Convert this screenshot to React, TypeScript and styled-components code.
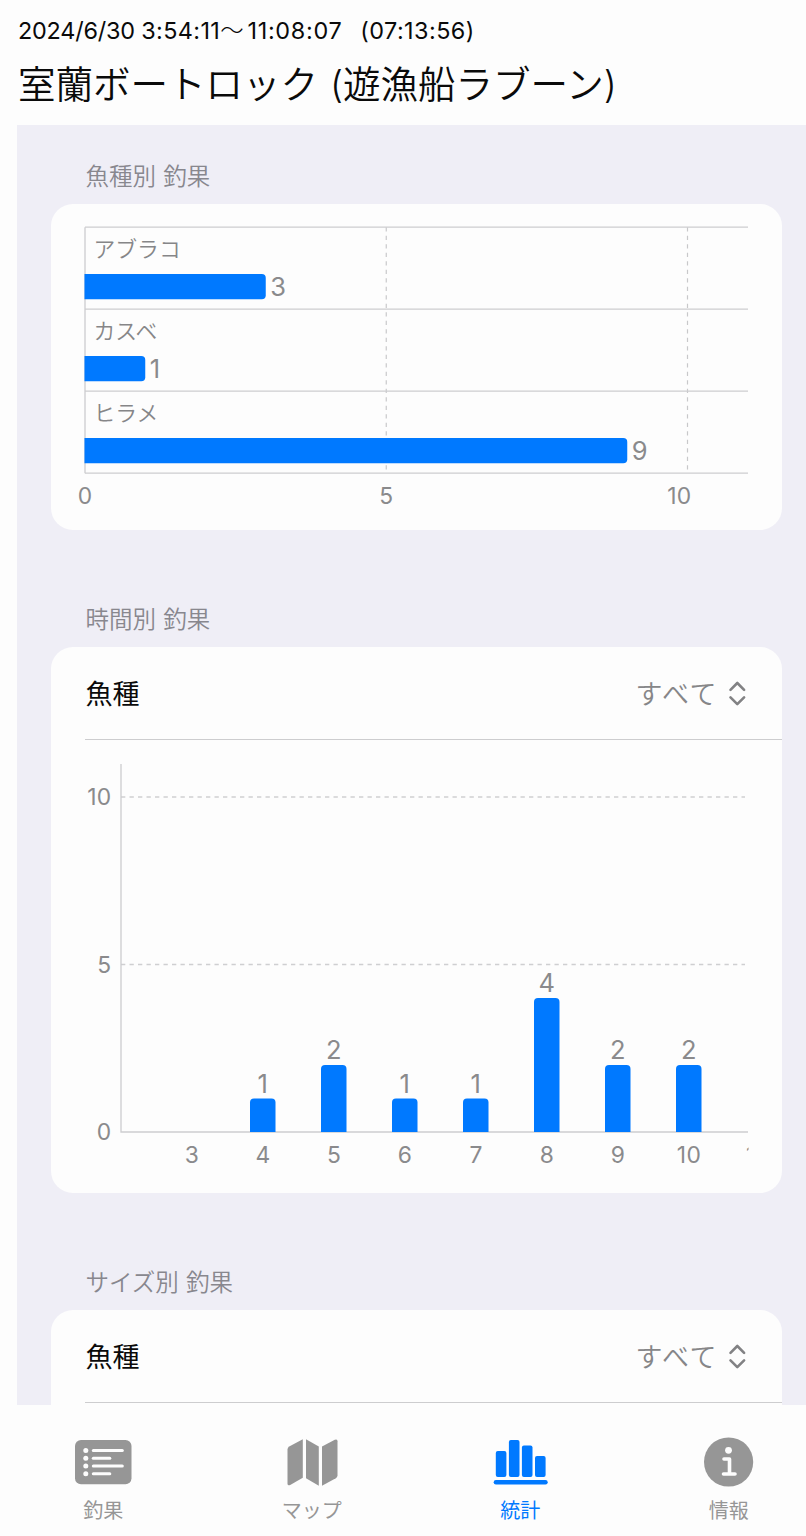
import React from "react";
import styled, { createGlobalStyle } from "styled-components";

const FONT = `Inter, "Noto Sans CJK JP", sans-serif`;
const BLUE = "#0079ff";
const GRAY = "#8a8a8c";
const SURFACE = "#fdfdfd";
const LINE = "#cdcdcf";

const GlobalStyle = createGlobalStyle`
  * { box-sizing: border-box; }
  body { margin: 0; background: ${SURFACE}; font-family: ${FONT}; }
`;

const Screen = styled.div`
  display: flex;
  flex-direction: column;
  width: 806px;
  height: 1536px;
  overflow: hidden;
  background: ${SURFACE};
  color: #0a0a0a;
`;

const Header = styled.header`
  flex: none;
  height: 125px;
  padding: 16px 0 0 18px;
  white-space: pre;
`;

const TripTime = styled.div`
  height: 30px;
  line-height: 30px;
  font-size: 23.4px;
`;

const TimePart = styled.span<{ $spacing: number; $weight?: number }>`
  letter-spacing: ${(p) => p.$spacing}px;
  font-weight: ${(p) => p.$weight ?? 400};
`;

const TripTitle = styled.h1`
  margin: 11px 0 0;
  height: 56px;
  line-height: 56px;
  font-size: 37.5px;
  font-weight: 350;
  word-spacing: 1.5px;
`;

const ScrollArea = styled.main`
  flex: none;
  height: 1280px;
  margin-left: 17px;
  padding: 0 24px 0 34px;
  overflow: hidden;
  background: #efeef6;
`;

const Section = styled.section`
  margin-bottom: 38px;
`;

const SectionTitle = styled.h2`
  margin: 0;
  height: 79px;
  padding: 37px 0 0 34.5px;
  line-height: 26px;
  font-family: "Noto Sans CJK JP", sans-serif;
  font-size: 23.5px;
  font-weight: 350;
  word-spacing: 2px;
  color: #88878e;
`;

const Card = styled.div`
  border-radius: 22px;
  background: ${SURFACE};
  overflow: hidden;
`;

const PickerRow = styled.div`
  display: flex;
  align-items: center;
  justify-content: space-between;
  height: 93px;
  margin-left: 34px;
  padding: 0 36px 2px 0.5px;
  border-bottom: 1px solid ${LINE};
  font-size: 27px;
  font-weight: 400;
`;

const PickerValue = styled.span`
  display: flex;
  align-items: center;
  gap: 10px;
  padding-top: 1px;
  font-weight: 350;
  letter-spacing: 1.5px;
  color: #868688;
`;

const Chart = styled.svg`
  display: block;
  font-family: ${FONT};
  fill: ${GRAY};
`;

const TabBar = styled.nav`
  display: flex;
  flex: none;
  height: 131px;
  margin-left: -1px;
`;

const Tab = styled.a<{ $active?: boolean }>`
  display: flex;
  flex: none;
  flex-direction: column;
  align-items: center;
  width: 208.5px;
  padding-top: 29px;
  color: ${(p) => (p.$active ? BLUE : "#969696")};
`;

const TabLabel = styled.span`
  margin-top: 7px;
  line-height: 28px;
  font-size: 20px;
  font-weight: 400;
`;

const SPECIES = [
  { name: "アブラコ", count: 3 },
  { name: "カスベ", count: 1 },
  { name: "ヒラメ", count: 9 },
];

const HOURS = [
  { hour: 3, count: 0 },
  { hour: 4, count: 1 },
  { hour: 5, count: 2 },
  { hour: 6, count: 1 },
  { hour: 7, count: 1 },
  { hour: 8, count: 4 },
  { hour: 9, count: 2 },
  { hour: 10, count: 2 },
  { hour: 11, count: 0 },
];

function SpeciesChart() {
  const left = 34;
  const right = 697;
  const unit = 60.25;
  const top = 23.2;
  const row = 82;
  const bottom = top + row * 3;
  return (
    <Chart width="731" height="326">
      {[5, 10].map((n) => (
        <line key={n} x1={left + n * unit} x2={left + n * unit} y1={top} y2={bottom - 3} stroke="#c8c8ca" strokeWidth="1.2" strokeDasharray="4.3 4.2" />
      ))}
      {[0, 1, 2, 3].map((i) => (
        <line key={i} x1={left} x2={right} y1={top + i * row} y2={top + i * row} stroke={LINE} strokeWidth="1.3" />
      ))}
      <line x1={left} x2={left} y1={top} y2={bottom} stroke={LINE} strokeWidth="1.3" />
      {SPECIES.map((s, i) => {
        const y = top + i * row;
        const w = s.count * unit;
        return (
          <g key={s.name}>
            <text x={left + 8.5} y={y + 29.6} fontSize="21.8" fontWeight="350" fill="#868688">{s.name}</text>
            <path
              fill={BLUE}
              d={`M${left - 0.5} ${y + 46.8}h${w - 3.5}q4 0 4 4v17.3q0 4 -4 4h${-(w - 3.5)}z`}
            />
            <text x={left + w + 4.5} y={y + 69} fontSize="25.5">{s.count}</text>
          </g>
        );
      })}
      <text x={left} y="299.5" fontSize="22.8" textAnchor="middle">0</text>
      <text x={left + 5 * unit} y="299.5" fontSize="22.8" textAnchor="middle">5</text>
      <text x="640.5" y="299.5" fontSize="22.8" textAnchor="end" letterSpacing="0.3">10</text>
    </Chart>
  );
}

function HourChart() {
  const left = 70;
  const right = 697;
  const base = 392;
  const unit = 33.5;
  const x = (hour: number) => 140.7 + (hour - 3) * 71;
  return (
    <Chart width="731" height="453">
      <clipPath id="hour-plot"><rect x="0" y="0" width="697.5" height="453" /></clipPath>
      {[5, 10].map((n) => (
        <line key={n} x1={left} x2={right - 3} y1={base - n * unit} y2={base - n * unit} stroke="#cfcfd1" strokeWidth="1.3" strokeDasharray="4.3 4.2" />
      ))}
      <path d={`M${left} 24V${base}H${right}`} fill="none" stroke={LINE} strokeWidth="1.3" />
      {[0, 5, 10].map((n) => (
        <text key={n} x="60.5" y={base - n * unit + 8} fontSize="22.8" textAnchor="end" letterSpacing="0.3">{n}</text>
      ))}
      <g clipPath="url(#hour-plot)" textAnchor="middle">
        {HOURS.map((h) => {
          const height = h.count * unit;
          const cx = x(h.hour);
          return (
            <g key={h.hour}>
              {h.count > 0 && (
                <>
                  <path fill={BLUE} d={`M${cx - 12.7} ${base}v${-(height - 4)}q0 -4 4 -4h17.5q4 0 4 4v${height - 4}z`} />
                  <text x={cx} y={base - height - 6} fontSize="25.5">{h.count}</text>
                </>
              )}
              <text x={h.hour > 10 ? cx - 4 : cx + 0.3} y="422.5" fontSize="22.8" letterSpacing="0.3">{h.hour}</text>
            </g>
          );
        })}
      </g>
    </Chart>
  );
}

function SpeciesPicker() {
  return (
    <PickerRow>
      <span>魚種</span>
      <PickerValue>
        すべて
        <svg width="18" height="26" fill="none" stroke="#828284" strokeWidth="2.6" strokeLinecap="round" strokeLinejoin="round">
          <path d="M2.5 9.8 9.3 3l6.8 6.8M2.5 17.3 9.3 24.100l6.8-6.800" />
        </svg>
      </PickerValue>
    </PickerRow>
  );
}

const ListIcon = () => (
  <svg width="60" height="56" fill="currentColor">
    <rect x="2" y="6" width="56.5" height="44.3" rx="6" />
    <g fill={SURFACE}>
      {[16.5, 24.2, 32, 39.8].map((y, i) => (
        <React.Fragment key={y}>
          <circle cx="12.8" cy={y} r="2.5" />
          <rect x="18.8" y={y - 1.5} width={i % 2 ? 19.5 : 32} height="3" rx="1.5" />
        </React.Fragment>
      ))}
    </g>
  </svg>
);

const MapIcon = () => (
  <svg width="60" height="56" fill="currentColor">
    <path d="M5.5 15.5q0-2 1.7-3L20.8 5.2v38.5L8.2 51q-2.7 1.2-2.7-1.5z" />
    <path d="M24 5.2 36.8 12.5v39.2L24 44.2z" />
    <path d="M40 12.500 52.800 5.800q2.700-1.200 2.700 1.500v34q0 2-1.700 3L40 51.700z" />
  </svg>
);

const BarsIcon = () => (
  <svg width="60" height="56" fill="currentColor">
    <rect x="5.8" y="17" width="10.6" height="26" rx="2" />
    <rect x="18.9" y="6" width="10.6" height="37" rx="2" />
    <rect x="31.9" y="11.5" width="10.6" height="31.5" rx="2" />
    <rect x="45" y="22" width="10.6" height="21" rx="2" />
    <rect x="3.7" y="46" width="54" height="4.5" rx="2.2" />
  </svg>
);

const InfoIcon = () => (
  <svg width="60" height="56" fill="currentColor">
    <circle cx="29.6" cy="28" r="24.6" />
    <circle cx="29.5" cy="16.3" r="3.4" fill={SURFACE} />
    <path d="M25 25h5.5v15M24.5 40h11.5" fill="none" stroke={SURFACE} strokeWidth="3.6" strokeLinecap="round" strokeLinejoin="round" />
  </svg>
);

const TABS = [
  { label: "釣果", Icon: ListIcon },
  { label: "マップ", Icon: MapIcon },
  { label: "統計", Icon: BarsIcon, active: true },
  { label: "情報", Icon: InfoIcon },
];

export default function App() {
  return (
    <>
      <GlobalStyle />
      <Screen>
        <Header>
          <TripTime>
            <TimePart $spacing={-0.2}>2024/6/30 </TimePart>
            <TimePart $spacing={0.4}>3:54:11</TimePart>
            <TimePart $spacing={3.8} $weight={300}>〜</TimePart>
            <TimePart $spacing={0.7}>11:08:07</TimePart>
            <TimePart $spacing={-0.6}>{"   "}</TimePart>
            <TimePart $spacing={0.45}>(07:13:56)</TimePart>
          </TripTime>
          <TripTitle>室蘭ボートロック (遊漁船ラブーン)</TripTitle>
        </Header>
        <ScrollArea>
          <Section>
            <SectionTitle>魚種別 釣果</SectionTitle>
            <Card>
              <SpeciesChart />
            </Card>
          </Section>
          <Section>
            <SectionTitle>時間別 釣果</SectionTitle>
            <Card>
              <SpeciesPicker />
              <HourChart />
            </Card>
          </Section>
          <Section>
            <SectionTitle>サイズ別 釣果</SectionTitle>
            <Card>
              <SpeciesPicker />
              <Chart width="731" height="453" />
            </Card>
          </Section>
        </ScrollArea>
        <TabBar>
          {TABS.map(({ label, Icon, active }) => (
            <Tab key={label} $active={active}>
              <Icon />
              <TabLabel>{label}</TabLabel>
            </Tab>
          ))}
        </TabBar>
      </Screen>
    </>
  );
}
